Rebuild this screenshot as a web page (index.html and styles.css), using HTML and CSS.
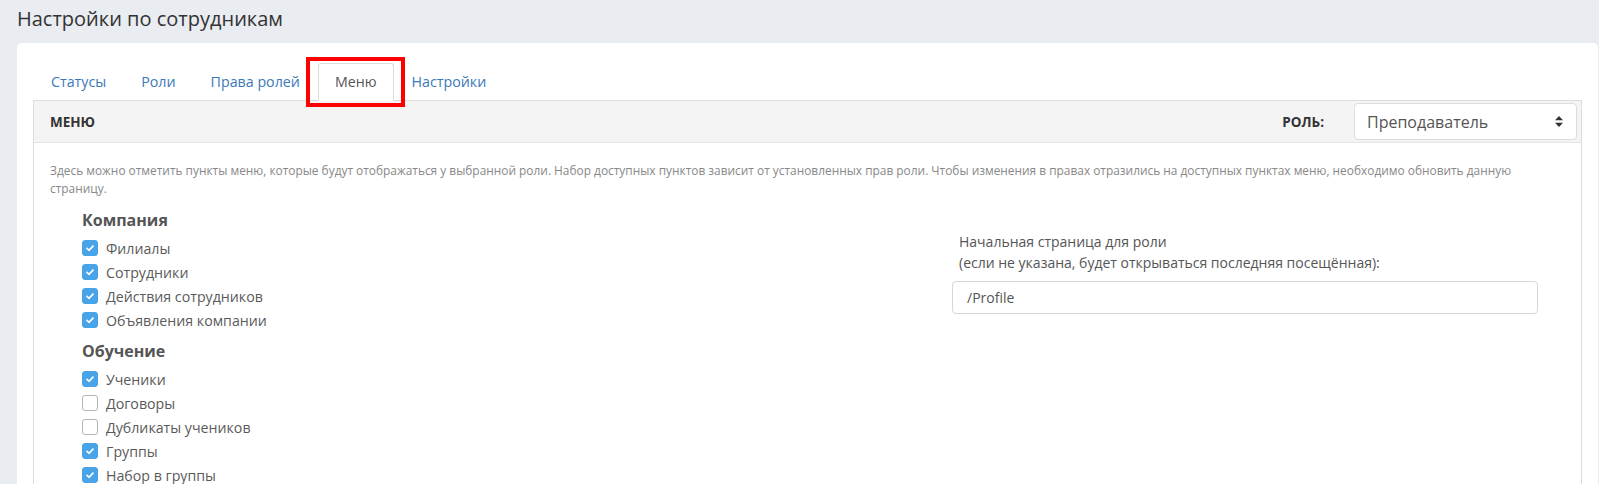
FILE: index.html
```html
<!DOCTYPE html>
<html lang="ru">
<head>
    <meta charset="UTF-8">
    <meta name="viewport" content="width=device-width, initial-scale=1.0">
    <title>Настройки по сотрудникам</title>
    <link rel="stylesheet" href="styles.css">
</head>
<body>
    <h1 class="page-title">Настройки по сотрудникам</h1>

    <div class="card">
        <!-- Tabs -->
        <ul class="tabs">
            <li><a href="#">Статусы</a></li>
            <li><a href="#">Роли</a></li>
            <li><a href="#">Права ролей</a></li>
            <li class="active"><a href="#">Меню</a></li>
            <li><a href="#">Настройки</a></li>
        </ul>

        <div class="panel">
            <div class="panel-heading">
                <span class="panel-title">Меню</span>
                <span class="role-label">Роль:</span>
                <div class="select">
                    <span>Преподаватель</span>
                    <svg width="8" height="11" viewBox="0 0 8 11">
                        <path d="M4 0 L8 4.2 L0 4.2 Z M4 11 L8 6.8 L0 6.8 Z" fill="#333"/>
                    </svg>
                </div>
            </div>

            <div class="panel-body">
                <p class="hint">Здесь можно отметить пункты меню, которые будут отображаться у выбранной роли. Набор доступных пунктов зависит от установленных прав роли. Чтобы изменения в правах отразились на доступных пунктах меню, необходимо обновить данную страницу.</p>

                <div class="menu-grid">
                    <div class="menu-list">
                        <h4>Компания</h4>
                        <label class="check"><span class="box on"><svg viewBox="0 0 16 16"><path d="M4.6 8.4 L7 10.6 L11.4 5.8"/></svg></span>Филиалы</label>
                        <label class="check"><span class="box on"><svg viewBox="0 0 16 16"><path d="M4.6 8.4 L7 10.6 L11.4 5.8"/></svg></span>Сотрудники</label>
                        <label class="check"><span class="box on"><svg viewBox="0 0 16 16"><path d="M4.6 8.4 L7 10.6 L11.4 5.8"/></svg></span>Действия сотрудников</label>
                        <label class="check"><span class="box on"><svg viewBox="0 0 16 16"><path d="M4.6 8.4 L7 10.6 L11.4 5.8"/></svg></span>Объявления компании</label>

                        <h4>Обучение</h4>
                        <label class="check"><span class="box on"><svg viewBox="0 0 16 16"><path d="M4.6 8.4 L7 10.6 L11.4 5.8"/></svg></span>Ученики</label>
                        <label class="check"><span class="box"></span>Договоры</label>
                        <label class="check"><span class="box"></span>Дубликаты учеников</label>
                        <label class="check"><span class="box on"><svg viewBox="0 0 16 16"><path d="M4.6 8.4 L7 10.6 L11.4 5.8"/></svg></span>Группы</label>
                        <label class="check"><span class="box on"><svg viewBox="0 0 16 16"><path d="M4.6 8.4 L7 10.6 L11.4 5.8"/></svg></span>Набор в группы</label>
                    </div>

                    <div class="start-page">
                        <label for="startPage">Начальная страница для роли<br>(если не указана, будет открываться последняя посещённая):</label>
                        <input type="text" id="startPage" value="/Profile">
                    </div>
                </div>
            </div>
        </div>
    </div>
</body>
</html>
```

FILE: styles.css
```css
* {
    margin: 0;
    padding: 0;
    box-sizing: border-box;
}

html, body {
    overflow: hidden;
}

body {
    background: #e9ecf0;
    font-family: 'Open Sans', 'Liberation Sans', sans-serif;
    color: #555;
    padding-left: 17px;
    min-height: 100vh;
}

.page-title {
    font-size: 20px;
    line-height: 28px;
    font-weight: 400;
    color: #333;
    padding: 5px 0 10px;
}

.card {
    background: #fff;
    border-radius: 5px 5px 0 0;
    margin-right: 1px;
    padding: 20px 16px 40px;
}

/* Tabs */
.tabs {
    list-style: none;
    display: flex;
    padding-left: 1px;
}

.tabs li {
    margin-right: 1px;
    position: relative;
}

.tabs a {
    display: block;
    padding: 8px 16px;
    line-height: 20px;
    font-size: 14.25px;
    color: #3a79b9;
    text-decoration: none;
    border: 1px solid transparent;
    border-bottom: none;
    border-radius: 3px 3px 0 0;
}

.tabs li.active a {
    color: #555;
    background: #fff;
    border-color: #ddd;
    margin-bottom: -1px;
    padding-bottom: 9px;
    position: relative;
    z-index: 1;
}

/* red marker around the selected tab */
.tabs li.active::after {
    content: '';
    position: absolute;
    top: -6px;
    left: -12px;
    right: -11px;
    bottom: -7px;
    border: 4px solid #ff0000;
    z-index: 2;
}

/* Panel */
.panel {
    border: 1px solid #ddd;
}

.panel-heading {
    display: flex;
    align-items: center;
    background: #f4f4f4;
    border-bottom: 1px solid #e4e4e4;
    padding: 2px 4px 2px 16px;
}

.panel-title {
    flex: 1;
    font-size: 13.5px;
    font-weight: 700;
    text-transform: uppercase;
    color: #333;
}

.role-label {
    font-size: 13.5px;
    font-weight: 700;
    text-transform: uppercase;
    color: #333;
    margin-right: 30px;
}

.select {
    width: 223px;
    height: 37px;
    display: flex;
    align-items: center;
    justify-content: space-between;
    background: #fff;
    border: 1px solid #ddd;
    border-radius: 4px;
    padding: 0 13px 0 12px;
    font-size: 16px;
    color: #555;
}

.panel-body {
    padding: 18px 16px 0;
}

.hint {
    font-size: 11.9px;
    line-height: 18px;
    color: #888;
}

.menu-grid {
    display: grid;
    grid-template-columns: 1fr 586px;
    column-gap: 20px;
    padding-right: 27px;
    margin-top: 11px;
}

.menu-list {
    padding-left: 32px;
}

.menu-list h4 {
    font-size: 16px;
    line-height: 24px;
    font-weight: 700;
    color: #555;
    margin-bottom: 4px;
}

.menu-list .check + h4 {
    margin-top: 7px;
}

.check {
    display: flex;
    align-items: center;
    gap: 8px;
    height: 24px;
    font-size: 14.2px;
    color: #5a5a5a;
}

.box {
    width: 16px;
    height: 16px;
    border-radius: 3px;
    border: 1px solid #b4b4b4;
    background: #fff;
    display: flex;
}

.box.on {
    background: #48a3e8;
    border-color: #48a3e8;
}

.box svg {
    width: 14px;
    height: 14px;
    fill: none;
    stroke: #fff;
    stroke-width: 2;
    stroke-linecap: round;
    stroke-linejoin: round;
}

.start-page {
    padding-top: 23px;
}

.start-page label {
    display: block;
    font-size: 14px;
    line-height: 21px;
    color: #555;
    padding-left: 7px;
    margin-bottom: 8px;
}

.start-page input {
    width: 100%;
    height: 33px;
    border: 1px solid #d6d6d6;
    border-radius: 4px;
    padding: 0 14px;
    font-family: 'Open Sans', 'Liberation Sans', sans-serif;
    font-size: 14px;
    color: #555;
    outline: none;
}
```
